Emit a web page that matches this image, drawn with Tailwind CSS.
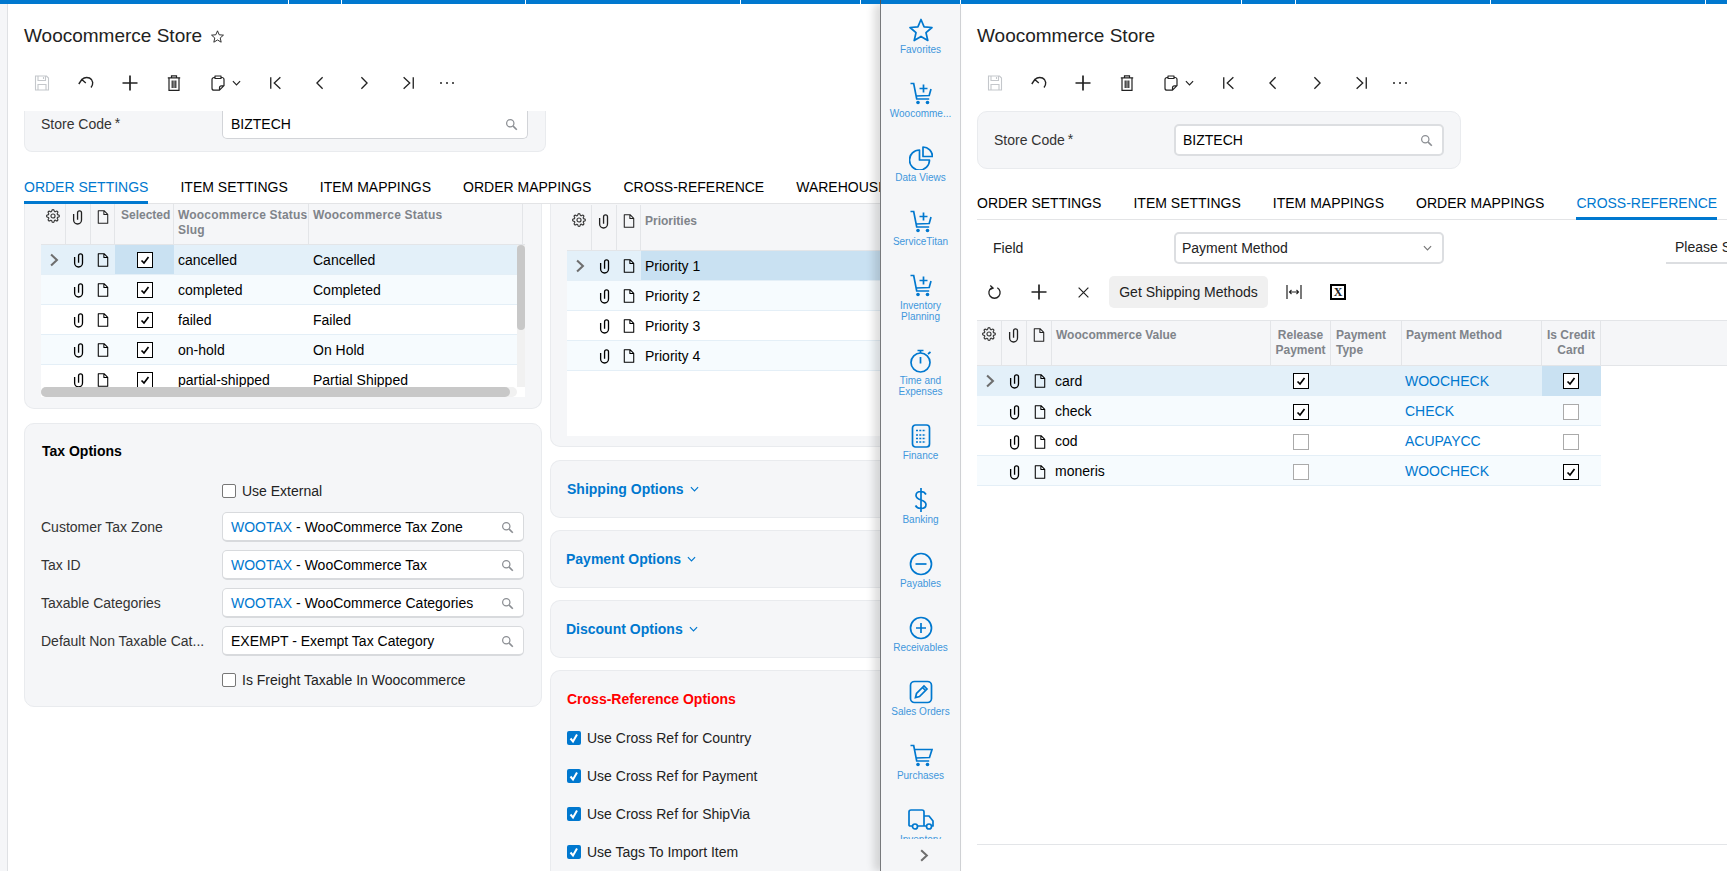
<!DOCTYPE html>
<html><head><meta charset="utf-8"><title>Woocommerce Store</title>
<script src="https://cdn.jsdelivr.net/npm/@tailwindcss/browser@4"></script></head>
<body class="m-0 bg-white">
<svg width="0" height="0" class="absolute">
<defs>
<symbol id="gear" viewBox="0 0 24 24"><g fill="none" stroke="currentColor" stroke-width="1.900"><circle cx="12" cy="12" r="3.500"/><path d="M19.4 15a1.65 1.65 0 0 0 .33 1.82l.06.06a2 2 0 0 1 0 2.83 2 2 0 0 1-2.83 0l-.06-.06a1.65 1.65 0 0 0-1.82-.33 1.65 1.65 0 0 0-1 1.51V21a2 2 0 0 1-2 2 2 2 0 0 1-2-2v-.09A1.65 1.65 0 0 0 9 19.4a1.65 1.65 0 0 0-1.82.33l-.06.06a2 2 0 0 1-2.83 0 2 2 0 0 1 0-2.83l.06-.06a1.65 1.65 0 0 0 .33-1.82 1.65 1.65 0 0 0-1.51-1H3a2 2 0 0 1-2-2 2 2 0 0 1 2-2h.09A1.65 1.65 0 0 0 4.6 9a1.65 1.65 0 0 0-.33-1.82l-.06-.06a2 2 0 0 1 0-2.83 2 2 0 0 1 2.83 0l.06.06a1.65 1.65 0 0 0 1.82.33H9a1.65 1.65 0 0 0 1-1.51V3a2 2 0 0 1 2-2 2 2 0 0 1 2 2v.09a1.65 1.65 0 0 0 1 1.51 1.65 1.65 0 0 0 1.82-.33l.06-.06a2 2 0 0 1 2.83 0 2 2 0 0 1 0 2.83l-.06.06a1.65 1.65 0 0 0-.33 1.82V9a1.65 1.65 0 0 0 1.51 1H21a2 2 0 0 1 2 2 2 2 0 0 1-2 2h-.09a1.65 1.65 0 0 0-1.51 1z"/></g></symbol>
<symbol id="clip" viewBox="0 0 16 16"><path fill="none" stroke="currentColor" stroke-width="1.500" d="M3 4.500v7a4.500 4.500 0 0 0 9 0V3.200a2.250 2.250 0 0 0-4.500 0V11"/></symbol>
<symbol id="doc" viewBox="0 0 16 16"><path fill="none" stroke="currentColor" stroke-width="1.200" stroke-linejoin="round" d="M2.600.8h6.600l4.200 4.200v10.200H2.600zM9 .8V5.200h4.400"/></symbol>
<symbol id="search" viewBox="0 0 16 16"><g fill="none" stroke="currentColor" stroke-width="1.500"><circle cx="6.500" cy="6.500" r="4.500"/><path stroke-width="2" d="M10 10l4.500 4.500"/></g></symbol>
<symbol id="chev" viewBox="0 0 10 6"><path fill="none" stroke="currentColor" stroke-width="1.300" d="M1 1l4 4 4-4"/></symbol>
<symbol id="rowarrow" viewBox="0 0 12 16"><path fill="none" stroke="currentColor" stroke-width="2.500" d="M2.500 1.500L9.500 8l-7 6.500"/></symbol>
<symbol id="save" viewBox="0 0 16 16"><path fill="none" stroke="currentColor" stroke-width="1.100" d="M1.500 1h11l2 2v12h-13zM4 1v4.500h7.500V1M9.500 2v2M4 15V9.500h8V15"/></symbol>
<symbol id="undo" viewBox="0 0 16 16"><path fill="none" stroke="currentColor" stroke-width="1.400" d="M.8 9l3-4.500 4 3.500M3.800 4.500C6 2.500 9 2 11.500 3c4 2 4 6.500 1.500 9.500"/></symbol>
<symbol id="plus" viewBox="0 0 16 16"><path fill="none" stroke="currentColor" stroke-width="1.700" d="M8 .5v15M.5 8h15"/></symbol>
<symbol id="trash" viewBox="0 0 16 16"><path fill="none" stroke="currentColor" stroke-width="1.200" d="M1.800 2.800h12.400M5.500 2.800V.8h5v2M3 2.800v12.500h10V2.800M6.200 5.500v7.500M9.800 5.500v7.500M8 5.500v7.500"/></symbol>
<symbol id="copy" viewBox="0 0 16 16"><path fill="none" stroke="currentColor" stroke-width="1.200" stroke-linejoin="round" d="M5 2.500H4a2 2 0 0 0-2 2v8.700a2 2 0 0 0 2 2h5.500l4.500-4.500V4.500a2 2 0 0 0-2-2h-1M5 1h6v2.500H5zM9.500 15v-2.200a2 2 0 0 1 2-2H14"/></symbol>
<symbol id="first" viewBox="0 0 16 16"><path fill="none" stroke="currentColor" stroke-width="1.500" d="M2 1.500v13M13 1.500L6 8l7 6.500"/></symbol>
<symbol id="prev" viewBox="0 0 16 16"><path fill="none" stroke="currentColor" stroke-width="1.500" d="M11 1.500L4.500 8l6.500 6.500"/></symbol>
<symbol id="next" viewBox="0 0 16 16"><path fill="none" stroke="currentColor" stroke-width="1.500" d="M5 1.500L11.500 8 5 14.500"/></symbol>
<symbol id="last" viewBox="0 0 16 16"><path fill="none" stroke="currentColor" stroke-width="1.500" d="M14 1.500v13M3 1.500L10 8l-7 6.500"/></symbol>
<symbol id="dots" viewBox="0 0 16 16"><g fill="currentColor"><circle cx="2" cy="8" r="1"/><circle cx="8" cy="8" r="1"/><circle cx="14" cy="8" r="1"/></g></symbol>
<symbol id="star" viewBox="0 0 24 24"><path fill="none" stroke="currentColor" stroke-width="1.700" stroke-linejoin="round" d="M12 1.500l3.100 7.300 7.900.7-6 5.200 1.800 7.800L12 18.400l-6.800 4.100L7 14.700 1 9.500l7.900-.7z"/></symbol>
<symbol id="cartplus" viewBox="0 0 24 24"><g fill="none" stroke="currentColor" stroke-width="1.700"><path d="M1.500 1.500h3.200l3 15.500h12.500M22 7l-1.800 6.500L7 14M14.500 2.500v8M10.500 6.500h8"/></g><circle cx="9" cy="20.500" r="1.800" fill="currentColor"/><circle cx="18.500" cy="20.500" r="1.800" fill="currentColor"/></symbol>
<symbol id="cart" viewBox="0 0 24 24"><g fill="none" stroke="currentColor" stroke-width="1.700"><path d="M1.500 1.500h3.200l3 15.500h12.500M5.500 5.500H23l-2.500 8L7 14"/></g><circle cx="9" cy="20.500" r="1.800" fill="currentColor"/><circle cx="18.500" cy="20.500" r="1.800" fill="currentColor"/></symbol>
<symbol id="pie" viewBox="0 0 24 24"><g fill="none" stroke="currentColor" stroke-width="1.700" stroke-linejoin="round"><path d="M10.500 4a10 10 0 1 0 10 10H10.500z"/><path d="M14 1a9.500 9.500 0 0 1 9.500 9.500H14z"/></g></symbol>
<symbol id="timer" viewBox="0 0 24 24"><g fill="none" stroke="currentColor" stroke-width="1.700"><circle cx="11.500" cy="13.500" r="9.500"/><path d="M11.500 8v6.500M8.500 1.500h6M11.500 1.500v2.500M19 5l2.500-2"/></g></symbol>
<symbol id="calc" viewBox="0 0 24 24"><rect x="3.500" y="1" width="17" height="22" rx="3" fill="none" stroke="currentColor" stroke-width="1.700"/><path fill="none" stroke="currentColor" stroke-width="1.600" stroke-dasharray="2 1.300" d="M7 6.500h10M7 11h10M7 14.500h10M7 18h10"/></symbol>
<symbol id="dollar" viewBox="0 0 24 24"><path fill="none" stroke="currentColor" stroke-width="1.700" d="M17 6.500C16 4.500 14.500 3.500 12 3.500c-3 0-5 1.700-5 4 0 5.500 10 3.500 10 9 0 2.300-2 4-5 4-2.500 0-4.500-1-5.500-3M12 0v24"/></symbol>
<symbol id="minusc" viewBox="0 0 24 24"><g fill="none" stroke="currentColor" stroke-width="1.700"><circle cx="12" cy="12" r="10.500"/><path d="M6.500 12h11"/></g></symbol>
<symbol id="plusc" viewBox="0 0 24 24"><g fill="none" stroke="currentColor" stroke-width="1.700"><circle cx="12" cy="12" r="10.500"/><path d="M7 12h10M12 7v10"/></g></symbol>
<symbol id="edit" viewBox="0 0 24 24"><g fill="none" stroke="currentColor" stroke-width="1.700"><rect x="1.500" y="1.500" width="21" height="21" rx="4"/><path d="M6.500 17.500l1-4L15 6l3 3-7.500 7.500zM13.500 7.500l3 3"/></g></symbol>
<symbol id="truck" viewBox="0 0 26 24"><g fill="none" stroke="currentColor" stroke-width="1.700" stroke-linejoin="round"><path d="M5 18H2a1 1 0 0 1-1-1V4a2 2 0 0 1 2-2h11a2 2 0 0 1 2 2v14H9M16 8h5l4 5v5h-2M19 18h-3"/><circle cx="7" cy="18.500" r="2.500"/><circle cx="21" cy="18.500" r="2.500"/></g></symbol>
<symbol id="refresh" viewBox="0 0 16 16"><path fill="none" stroke="currentColor" stroke-width="1.400" d="M5 3.500a6 6 0 1 0 6 0M3.500 1L6.500 3.800 3 5.500"/></symbol>
<symbol id="x" viewBox="0 0 16 16"><path fill="none" stroke="currentColor" stroke-width="1.500" d="M2 2l12 12M14 2L2 14"/></symbol>
<symbol id="fit" viewBox="0 0 16 16"><path fill="none" stroke="currentColor" stroke-width="1.200" d="M1 1v14M15 1v14"/><path fill="none" stroke="currentColor" stroke-width="1.100" d="M3.500 8h9M5.500 6L3.500 8l2 2M10.500 6l2 2-2 2"/></symbol>
</defs></svg>

<div class="w-[1727px] h-[871px] overflow-hidden flex flex-col font-['Liberation_Sans',Arial,sans-serif] text-[14px] text-black">
  <div class="h-[4px] shrink-0 flex bg-[#0078cf] relative z-20">
    <div class="w-[289px] border-r border-white"></div>
    <div class="w-[53px] border-r border-white"></div>
    <div class="w-[184px] border-r border-white"></div>
    <div class="w-[215px] border-r border-white"></div>
    <div class="w-[120px] border-r border-white"></div>
    <div class="w-[20px] border-r border-[#555]"></div>
    <div class="w-[80px] border-r border-white"></div>
    <div class="w-[281px] border-r border-white"></div>
    <div class="w-[54px] border-r border-white"></div>
    <div class="w-[195px] border-r border-white"></div>
    <div class="w-[215px] border-r border-white"></div>
    <div class="flex-1"></div>
  </div>
  <div class="flex flex-1 min-h-0">
    <!-- LEFT PANEL -->
    <div class="w-[880px] shrink-0 flex overflow-hidden">
      <div class="w-[8px] shrink-0 bg-[#f5f6f8] border-r border-[#dfe1e4]"></div>
      <div class="w-[872px] shrink-0 pl-[16px]">
        <div class="h-[62px] pt-[2px] flex items-center text-[19px] text-[#222]"><span>Woocommerce Store</span><svg class="w-[13px] h-[13px] ml-[9px] text-[#222]"><use href="#star"/></svg></div>
        <div class="h-[34px] flex items-center text-[#222] pl-[10px]">
          <div class="w-[44px]"><svg class="w-[16px] h-[16px] text-[#c4c7cb]"><use href="#save"/></svg></div>
          <div class="w-[44px]"><svg class="w-[16px] h-[16px]"><use href="#undo"/></svg></div>
          <div class="w-[44px]"><svg class="w-[16px] h-[16px]"><use href="#plus"/></svg></div>
          <div class="w-[44px]"><svg class="w-[16px] h-[16px]"><use href="#trash"/></svg></div>
          <div class="w-[59px] flex items-center gap-[6px]"><svg class="w-[16px] h-[16px]"><use href="#copy"/></svg><svg class="w-[9px] h-[6px]"><use href="#chev"/></svg></div>
          <div class="w-[44px]"><svg class="w-[14px] h-[14px]"><use href="#first"/></svg></div>
          <div class="w-[44px]"><svg class="w-[14px] h-[14px]"><use href="#prev"/></svg></div>
          <div class="w-[44px]"><svg class="w-[14px] h-[14px]"><use href="#next"/></svg></div>
          <div class="w-[38px]"><svg class="w-[14px] h-[14px]"><use href="#last"/></svg></div>
          <div><svg class="w-[16px] h-[16px]"><use href="#dots"/></svg></div>
        </div>
        <div class="mt-[11px] w-[522px] h-[41px] bg-[#f5f6f8] border-b border-x border-[#e9ebee] rounded-b-[8px] flex pl-[16px] pr-[17px]">
          <div class="w-[181px] h-[27px] flex items-center text-[#333]">Store Code<span class="ml-[3px] -mt-[2px]">*</span></div>
          <div class="flex-1 h-[28px] bg-white border-b border-x border-[#d2d4d8] rounded-b-[5px] flex items-center justify-between pl-[8px] pr-[9px]">BIZTECH<svg class="w-[13px] h-[13px] text-[#8b8e93]"><use href="#search"/></svg></div>
        </div>
        <div class="mt-[20px] h-[32px] w-[856px] flex gap-[32px] border-b border-[#e3e4e6] whitespace-nowrap">
          <div class="h-[32px] pt-[5px] border-b-[3px] border-[#0078cf] text-[#0078cf]">ORDER SETTINGS</div>
          <div class="pt-[5px]">ITEM SETTINGS</div><div class="pt-[5px]">ITEM MAPPINGS</div><div class="pt-[5px]">ORDER MAPPINGS</div><div class="pt-[5px]">CROSS-REFERENCE</div><div class="pt-[5px]">WAREHOUSE</div>
        </div>
        <div class="flex gap-[8px]">
          <!-- left column -->
          <div class="w-[518px] shrink-0">
            <div class="h-[205px] bg-[#f5f6f8] border-x border-b border-[#e9ebee] rounded-b-[10px] pl-[16px]">
              <div class="relative w-[484px] h-[193px] bg-white overflow-hidden">
                <div class="grid grid-cols-[25px_25px_24px_59px_135px_214px] h-[41px] bg-[#f5f6f8] border-b border-[#e3e5e8] text-[12px] font-bold text-[#80848a] leading-[15px] tracking-[0.2px]">
                  <div class="border-r border-[#e3e5e8] flex justify-center pt-[5px] text-[#333]"><svg class="w-[14px] h-[14px]"><use href="#gear"/></svg></div>
                  <div class="border-r border-[#e3e5e8] flex justify-center pt-[5px] text-[#222]"><svg class="w-[14px] h-[16px]"><use href="#clip"/></svg></div>
                  <div class="border-r border-[#e3e5e8] flex justify-center pt-[5px] text-[#222]"><svg class="w-[14px] h-[16px]"><use href="#doc"/></svg></div>
                  <div class="border-r border-[#e3e5e8] pt-[4px] pl-[6px] tracking-normal">Selected</div>
                  <div class="border-r border-[#e3e5e8] pt-[4px] pl-[4px]">Woocommerce Status Slug</div>
                  <div class="border-r border-[#e3e5e8] pt-[4px] pl-[4px]">Woocommerce Status</div>
                </div>
                <div class="grid grid-cols-[25px_25px_24px_59px_135px_214px] h-[30px] bg-[#e3f0f9] border-b border-[#e4eff7] items-center">
                  <div class="flex justify-center text-[#6e6e6e]"><svg class="w-[10px] h-[14px]"><use href="#rowarrow"/></svg></div>
                  <div class="flex justify-center"><svg class="w-[14px] h-[16px]"><use href="#clip"/></svg></div>
                  <div class="flex justify-center"><svg class="w-[14px] h-[16px]"><use href="#doc"/></svg></div>
                  <div class="h-[29px] bg-[#c9e1f2] flex items-center justify-center"><span class="w-[16px] h-[16px] bg-white border-[1.5px] border-black flex items-center justify-center"><svg viewBox="0 0 12 12" class="w-[12px] h-[12px]"><path fill="none" stroke="#000" stroke-width="1.700" d="M2.500 6.500l2.500 2.500 4.500-6"/></svg></span></div>
                  <div class="pl-[4px] pt-[1px]">cancelled</div><div class="pl-[4px] pt-[1px]">Cancelled</div>
                </div>
                <div class="grid grid-cols-[25px_25px_24px_59px_135px_214px] h-[30px] bg-[#f6fbfe] border-b border-[#e4eff7] items-center">
                  <div></div>
                  <div class="flex justify-center"><svg class="w-[14px] h-[16px]"><use href="#clip"/></svg></div>
                  <div class="flex justify-center"><svg class="w-[14px] h-[16px]"><use href="#doc"/></svg></div>
                  <div class="flex items-center justify-center"><span class="w-[16px] h-[16px] bg-white border-[1.5px] border-black flex items-center justify-center"><svg viewBox="0 0 12 12" class="w-[12px] h-[12px]"><path fill="none" stroke="#000" stroke-width="1.700" d="M2.500 6.500l2.500 2.500 4.500-6"/></svg></span></div>
                  <div class="pl-[4px] pt-[1px]">completed</div><div class="pl-[4px] pt-[1px]">Completed</div>
                </div>
                <div class="grid grid-cols-[25px_25px_24px_59px_135px_214px] h-[30px] bg-white border-b border-[#e4eff7] items-center">
                  <div></div>
                  <div class="flex justify-center"><svg class="w-[14px] h-[16px]"><use href="#clip"/></svg></div>
                  <div class="flex justify-center"><svg class="w-[14px] h-[16px]"><use href="#doc"/></svg></div>
                  <div class="flex items-center justify-center"><span class="w-[16px] h-[16px] bg-white border-[1.5px] border-black flex items-center justify-center"><svg viewBox="0 0 12 12" class="w-[12px] h-[12px]"><path fill="none" stroke="#000" stroke-width="1.700" d="M2.500 6.500l2.500 2.500 4.500-6"/></svg></span></div>
                  <div class="pl-[4px] pt-[1px]">failed</div><div class="pl-[4px] pt-[1px]">Failed</div>
                </div>
                <div class="grid grid-cols-[25px_25px_24px_59px_135px_214px] h-[30px] bg-[#f6fbfe] border-b border-[#e4eff7] items-center">
                  <div></div>
                  <div class="flex justify-center"><svg class="w-[14px] h-[16px]"><use href="#clip"/></svg></div>
                  <div class="flex justify-center"><svg class="w-[14px] h-[16px]"><use href="#doc"/></svg></div>
                  <div class="flex items-center justify-center"><span class="w-[16px] h-[16px] bg-white border-[1.5px] border-black flex items-center justify-center"><svg viewBox="0 0 12 12" class="w-[12px] h-[12px]"><path fill="none" stroke="#000" stroke-width="1.700" d="M2.500 6.500l2.500 2.500 4.500-6"/></svg></span></div>
                  <div class="pl-[4px] pt-[1px]">on-hold</div><div class="pl-[4px] pt-[1px]">On Hold</div>
                </div>
                <div class="grid grid-cols-[25px_25px_24px_59px_135px_214px] h-[30px] bg-white items-center">
                  <div></div>
                  <div class="flex justify-center"><svg class="w-[14px] h-[16px]"><use href="#clip"/></svg></div>
                  <div class="flex justify-center"><svg class="w-[14px] h-[16px]"><use href="#doc"/></svg></div>
                  <div class="flex items-center justify-center"><span class="w-[16px] h-[16px] bg-white border-[1.5px] border-black flex items-center justify-center"><svg viewBox="0 0 12 12" class="w-[12px] h-[12px]"><path fill="none" stroke="#000" stroke-width="1.700" d="M2.500 6.500l2.500 2.500 4.500-6"/></svg></span></div>
                  <div class="pl-[4px]">partial-shipped</div><div class="pl-[4px]">Partial Shipped</div>
                </div>
                <!-- scrollbars -->
                <div class="absolute left-[476px] top-[41px] w-[8px] h-[142px] bg-[#f1f1f1]"><div class="w-[8px] h-[85px] bg-[#c8c8c8] rounded-[4px]"></div></div>
                <div class="absolute left-0 top-[183px] w-[484px] h-[10px] bg-white"><div class="w-[476px] h-[10px] bg-[#f1f1f1] rounded-[5px]"><div class="w-[469px] h-[10px] bg-[#c8c8c8] rounded-[5px]"></div></div></div>
              </div>
            </div>
            <div class="mt-[14px] h-[284px] bg-[#f5f6f8] border border-[#e9ebee] rounded-[10px] pl-[16px] pr-[17px] pt-[18px]">
              <div class="font-bold h-[18px] leading-[18px] pl-[1px]">Tax Options</div>
              <div class="h-[20px] mt-[21px] flex items-center pl-[181px] text-[#222]"><span class="w-[14px] h-[14px] bg-white border border-[#777] rounded-[2px] mr-[6px]"></span>Use External</div>
              <div class="mt-[11px] flex flex-col gap-[8px] text-[#333]">
                <div class="flex items-center h-[30px]"><div class="w-[181px] shrink-0">Customer Tax Zone</div><div class="flex-1 h-[30px] bg-white border-b-2 border border-[#d8dadd] rounded-[5px] flex items-center justify-between pl-[8px] pr-[9px] pt-[2px] text-black"><span><span class="text-[#0078cf]">WOOTAX</span> - WooCommerce Tax Zone</span><svg class="w-[13px] h-[13px] text-[#8b8e93]"><use href="#search"/></svg></div></div>
                <div class="flex items-center h-[30px]"><div class="w-[181px] shrink-0">Tax ID</div><div class="flex-1 h-[30px] bg-white border-b-2 border border-[#d8dadd] rounded-[5px] flex items-center justify-between pl-[8px] pr-[9px] pt-[2px] text-black"><span><span class="text-[#0078cf]">WOOTAX</span> - WooCommerce Tax</span><svg class="w-[13px] h-[13px] text-[#8b8e93]"><use href="#search"/></svg></div></div>
                <div class="flex items-center h-[30px]"><div class="w-[181px] shrink-0">Taxable Categories</div><div class="flex-1 h-[30px] bg-white border-b-2 border border-[#d8dadd] rounded-[5px] flex items-center justify-between pl-[8px] pr-[9px] pt-[2px] text-black"><span><span class="text-[#0078cf]">WOOTAX</span> - WooCommerce Categories</span><svg class="w-[13px] h-[13px] text-[#8b8e93]"><use href="#search"/></svg></div></div>
                <div class="flex items-center h-[30px]"><div class="w-[181px] shrink-0 whitespace-nowrap">Default Non Taxable Cat...</div><div class="flex-1 h-[30px] bg-white border-b-2 border border-[#d8dadd] rounded-[5px] flex items-center justify-between pl-[8px] pr-[9px] pt-[2px] text-black"><span>EXEMPT - Exempt Tax Category</span><svg class="w-[13px] h-[13px] text-[#8b8e93]"><use href="#search"/></svg></div></div>
              </div>
              <div class="h-[20px] mt-[14px] flex items-center pl-[181px] text-[#222]"><span class="w-[14px] h-[14px] bg-white border border-[#777] rounded-[2px] mr-[6px]"></span>Is Freight Taxable In Woocommerce</div>
            </div>
          </div>
          <!-- right column -->
          <div class="w-[330px] shrink-0">
            <div class="h-[243px] bg-[#f5f6f8] border-l border-b border-[#e9ebee] rounded-bl-[10px] pl-[16px] pt-[1px]">
              <div class="h-[231px] bg-white w-[330px]">
                <div class="grid grid-cols-[25px_25px_24px_1fr] h-[46px] bg-[#f5f6f8] border-b border-[#e3e5e8] text-[12px] font-bold text-[#80848a]">
                  <div class="border-r border-[#e3e5e8] flex justify-center pt-[8px] text-[#333]"><svg class="w-[14px] h-[14px]"><use href="#gear"/></svg></div>
                  <div class="border-r border-[#e3e5e8] flex justify-center pt-[8px] text-[#222]"><svg class="w-[14px] h-[16px]"><use href="#clip"/></svg></div>
                  <div class="border-r border-[#e3e5e8] flex justify-center pt-[8px] text-[#222]"><svg class="w-[14px] h-[16px]"><use href="#doc"/></svg></div>
                  <div class="pt-[7px] pl-[4px]">Priorities</div>
                </div>
                <div class="grid grid-cols-[25px_25px_24px_1fr] h-[30px] bg-[#e3f0f9] border-b border-[#e4eff7] items-center">
                  <div class="flex justify-center text-[#6e6e6e]"><svg class="w-[10px] h-[14px]"><use href="#rowarrow"/></svg></div>
                  <div class="flex justify-center"><svg class="w-[14px] h-[16px]"><use href="#clip"/></svg></div>
                  <div class="flex justify-center"><svg class="w-[14px] h-[16px]"><use href="#doc"/></svg></div>
                  <div class="h-[29px] bg-[#c9e1f2] flex items-center pl-[4px] pt-[2px]">Priority 1</div>
                </div>
                <div class="grid grid-cols-[25px_25px_24px_1fr] h-[30px] bg-[#f6fbfe] border-b border-[#e4eff7] items-center">
                  <div></div>
                  <div class="flex justify-center"><svg class="w-[14px] h-[16px]"><use href="#clip"/></svg></div>
                  <div class="flex justify-center"><svg class="w-[14px] h-[16px]"><use href="#doc"/></svg></div>
                  <div class="pl-[4px] pt-[2px]">Priority 2</div>
                </div>
                <div class="grid grid-cols-[25px_25px_24px_1fr] h-[30px] bg-white border-b border-[#e4eff7] items-center">
                  <div></div>
                  <div class="flex justify-center"><svg class="w-[14px] h-[16px]"><use href="#clip"/></svg></div>
                  <div class="flex justify-center"><svg class="w-[14px] h-[16px]"><use href="#doc"/></svg></div>
                  <div class="pl-[4px] pt-[2px]">Priority 3</div>
                </div>
                <div class="grid grid-cols-[25px_25px_24px_1fr] h-[30px] bg-[#f6fbfe] border-b border-[#e4eff7] items-center">
                  <div></div>
                  <div class="flex justify-center"><svg class="w-[14px] h-[16px]"><use href="#clip"/></svg></div>
                  <div class="flex justify-center"><svg class="w-[14px] h-[16px]"><use href="#doc"/></svg></div>
                  <div class="pl-[4px] pt-[2px]">Priority 4</div>
                </div>
              </div>
            </div>
            <div class="mt-[13px] h-[58px] bg-[#f5f6f8] border-l border-y border-[#e9ebee] rounded-l-[10px] flex items-center pl-[16px] text-[#0078cf] font-bold">Shipping Options<svg class="w-[9px] h-[6px] ml-[6px]"><use href="#chev"/></svg></div>
            <div class="mt-[12px] h-[58px] bg-[#f5f6f8] border-l border-y border-[#e9ebee] rounded-l-[10px] flex items-center pl-[15px] text-[#0078cf] font-bold">Payment Options<svg class="w-[9px] h-[6px] ml-[6px]"><use href="#chev"/></svg></div>
            <div class="mt-[12px] h-[58px] bg-[#f5f6f8] border-l border-y border-[#e9ebee] rounded-l-[10px] flex items-center pl-[15px] text-[#0078cf] font-bold">Discount Options<svg class="w-[9px] h-[6px] ml-[6px]"><use href="#chev"/></svg></div>
            <div class="mt-[12px] h-[230px] bg-[#f5f6f8] border-l border-t border-[#e9ebee] rounded-tl-[10px] pl-[16px] pt-[19px]">
              <div class="font-bold text-[#ff0000] h-[18px] leading-[18px]">Cross-Reference Options</div>
              <div class="mt-[20px] flex flex-col gap-[18px] text-[#222]">
                <div class="h-[20px] flex items-center"><span class="w-[14px] h-[14px] bg-[#0078cf] rounded-[2px] mr-[6px] flex items-center justify-center"><svg viewBox="0 0 14 14" class="w-[14px] h-[14px]"><path fill="none" stroke="#fff" stroke-width="2" d="M3.500 7.500l2.500 3 4-7"/></svg></span>Use Cross Ref for Country</div>
                <div class="h-[20px] flex items-center"><span class="w-[14px] h-[14px] bg-[#0078cf] rounded-[2px] mr-[6px] flex items-center justify-center"><svg viewBox="0 0 14 14" class="w-[14px] h-[14px]"><path fill="none" stroke="#fff" stroke-width="2" d="M3.500 7.500l2.500 3 4-7"/></svg></span>Use Cross Ref for Payment</div>
                <div class="h-[20px] flex items-center"><span class="w-[14px] h-[14px] bg-[#0078cf] rounded-[2px] mr-[6px] flex items-center justify-center"><svg viewBox="0 0 14 14" class="w-[14px] h-[14px]"><path fill="none" stroke="#fff" stroke-width="2" d="M3.500 7.500l2.500 3 4-7"/></svg></span>Use Cross Ref for ShipVia</div>
                <div class="h-[20px] flex items-center"><span class="w-[14px] h-[14px] bg-[#0078cf] rounded-[2px] mr-[6px] flex items-center justify-center"><svg viewBox="0 0 14 14" class="w-[14px] h-[14px]"><path fill="none" stroke="#fff" stroke-width="2" d="M3.500 7.500l2.500 3 4-7"/></svg></span>Use Tags To Import Item</div>
              </div>
            </div>
          </div>
        </div>
      </div>
    </div>
    <!-- SIDEBAR -->
    <div class="relative z-10 w-[81px] shrink-0 flex flex-col bg-[#f5f6f8] border-l border-l-[#77797c] border-r border-r-[#cfd1d4] shadow-[-6px_0_8px_rgba(0,0,0,0.14)] text-[10px] leading-[11px] text-[#3f97dc] text-center">
      <div class="flex-1 min-h-0 overflow-hidden">
        <div class="h-[64px] pt-[14px] flex flex-col items-center text-[#0078cf]"><svg class="w-[24px] h-[24px] shrink-0"><use href="#star"/></svg><span class="text-[#3f97dc] mt-[2px]">Favorites</span></div>
        <div class="h-[64px] pt-[14px] flex flex-col items-center text-[#0078cf]"><svg class="w-[24px] h-[24px] shrink-0"><use href="#cartplus"/></svg><span class="text-[#3f97dc] mt-[2px]">Woocomme...</span></div>
        <div class="h-[64px] pt-[14px] flex flex-col items-center text-[#0078cf]"><svg class="w-[24px] h-[24px] shrink-0"><use href="#pie"/></svg><span class="text-[#3f97dc] mt-[2px]">Data Views</span></div>
        <div class="h-[64px] pt-[14px] flex flex-col items-center text-[#0078cf]"><svg class="w-[24px] h-[24px] shrink-0"><use href="#cartplus"/></svg><span class="text-[#3f97dc] mt-[2px]">ServiceTitan</span></div>
        <div class="h-[75px] pt-[14px] flex flex-col items-center text-[#0078cf]"><svg class="w-[24px] h-[24px] shrink-0"><use href="#cartplus"/></svg><span class="text-[#3f97dc] mt-[2px]">Inventory<br>Planning</span></div>
        <div class="h-[75px] pt-[14px] flex flex-col items-center text-[#0078cf]"><svg class="w-[24px] h-[24px] shrink-0"><use href="#timer"/></svg><span class="text-[#3f97dc] mt-[2px]">Time and<br>Expenses</span></div>
        <div class="h-[64px] pt-[14px] flex flex-col items-center text-[#0078cf]"><svg class="w-[24px] h-[24px] shrink-0"><use href="#calc"/></svg><span class="text-[#3f97dc] mt-[2px]">Finance</span></div>
        <div class="h-[64px] pt-[14px] flex flex-col items-center text-[#0078cf]"><svg class="w-[24px] h-[24px] shrink-0"><use href="#dollar"/></svg><span class="text-[#3f97dc] mt-[2px]">Banking</span></div>
        <div class="h-[64px] pt-[14px] flex flex-col items-center text-[#0078cf]"><svg class="w-[24px] h-[24px] shrink-0"><use href="#minusc"/></svg><span class="text-[#3f97dc] mt-[2px]">Payables</span></div>
        <div class="h-[64px] pt-[14px] flex flex-col items-center text-[#0078cf]"><svg class="w-[24px] h-[24px] shrink-0"><use href="#plusc"/></svg><span class="text-[#3f97dc] mt-[2px]">Receivables</span></div>
        <div class="h-[64px] pt-[14px] flex flex-col items-center text-[#0078cf]"><svg class="w-[24px] h-[24px] shrink-0"><use href="#edit"/></svg><span class="text-[#3f97dc] mt-[2px]">Sales Orders</span></div>
        <div class="h-[64px] pt-[14px] flex flex-col items-center text-[#0078cf]"><svg class="w-[24px] h-[24px] shrink-0"><use href="#cart"/></svg><span class="text-[#3f97dc] mt-[2px]">Purchases</span></div>
        <div class="h-[64px] pt-[14px] flex flex-col items-center text-[#0078cf]"><svg class="w-[26px] h-[24px] shrink-0"><use href="#truck"/></svg><span class="text-[#3f97dc] mt-[2px]">Inventory</span></div>
      </div>
      <div class="h-[32px] shrink-0 flex items-center justify-center text-[#6e6e6e] pl-[6px]"><svg class="w-[10px] h-[13px]"><use href="#rowarrow"/></svg></div>
    </div>
    <!-- RIGHT PANEL -->
    <div class="flex-1 min-w-0 pl-[16px] overflow-hidden">
      <div class="h-[62px] pt-[2px] flex items-center text-[19px] text-[#222]">Woocommerce Store</div>
      <div class="h-[34px] flex items-center text-[#222] pl-[10px]">
        <div class="w-[44px]"><svg class="w-[16px] h-[16px] text-[#c4c7cb]"><use href="#save"/></svg></div>
        <div class="w-[44px]"><svg class="w-[16px] h-[16px]"><use href="#undo"/></svg></div>
        <div class="w-[44px]"><svg class="w-[16px] h-[16px]"><use href="#plus"/></svg></div>
        <div class="w-[44px]"><svg class="w-[16px] h-[16px]"><use href="#trash"/></svg></div>
        <div class="w-[59px] flex items-center gap-[6px]"><svg class="w-[16px] h-[16px]"><use href="#copy"/></svg><svg class="w-[9px] h-[6px]"><use href="#chev"/></svg></div>
        <div class="w-[44px]"><svg class="w-[14px] h-[14px]"><use href="#first"/></svg></div>
        <div class="w-[44px]"><svg class="w-[14px] h-[14px]"><use href="#prev"/></svg></div>
        <div class="w-[44px]"><svg class="w-[14px] h-[14px]"><use href="#next"/></svg></div>
        <div class="w-[38px]"><svg class="w-[14px] h-[14px]"><use href="#last"/></svg></div>
        <div><svg class="w-[16px] h-[16px]"><use href="#dots"/></svg></div>
      </div>
      <div class="mt-[11px] w-[484px] h-[58px] bg-[#f5f6f8] border border-[#e9ebee] rounded-[10px] flex items-center pl-[16px] pr-[16px]">
        <div class="w-[180px] flex items-center text-[#333]">Store Code<span class="ml-[3px] -mt-[2px]">*</span></div>
        <div class="flex-1 h-[32px] bg-white border-2 border-[#dcdee1] rounded-[5px] flex items-center justify-between pl-[7px] pr-[9px]">BIZTECH<svg class="w-[13px] h-[13px] text-[#8b8e93]"><use href="#search"/></svg></div>
      </div>
      <div class="mt-[19px] h-[32px] w-[750px] flex gap-[32px] border-b border-[#e3e4e6] whitespace-nowrap">
        <div class="pt-[5px]">ORDER SETTINGS</div><div class="pt-[5px]">ITEM SETTINGS</div><div class="pt-[5px]">ITEM MAPPINGS</div><div class="pt-[5px]">ORDER MAPPINGS</div>
        <div class="h-[32px] pt-[5px] border-b-[3px] border-[#0078cf] text-[#0078cf]">CROSS-REFERENCE</div>
      </div>
      <div class="mt-[12px] h-[32px] flex items-center pl-[16px] text-[#222]">
        <div class="w-[181px] shrink-0">Field</div>
        <div class="w-[270px] shrink-0 h-[32px] bg-white border-2 border-[#dcdee1] rounded-[5px] flex items-center justify-between pl-[6px] pr-[10px]">Payment Method<svg class="w-[9px] h-[6px] text-[#777]"><use href="#chev"/></svg></div>
        <div class="ml-[222px] pl-[9px] w-[61px] shrink-0 h-[32px] border-b-2 border-[#dcdee1] flex items-center whitespace-nowrap">Please S</div>
      </div>
      <div class="mt-[12px] h-[32px] flex items-center pl-[10px] text-[#222]">
        <div class="w-[44px]"><svg class="w-[15px] h-[16px]"><use href="#refresh"/></svg></div>
        <div class="w-[44px]"><svg class="w-[16px] h-[16px]"><use href="#plus"/></svg></div>
        <div class="w-[34px] pl-[2px]"><svg class="w-[13px] h-[13px]"><use href="#x"/></svg></div>
        <div class="w-[159px] h-[32px] bg-[#f0f0f0] rounded-[5px] flex items-center justify-center">Get Shipping Methods</div>
        <div class="ml-[18px] w-[44px]"><svg class="w-[16px] h-[16px]"><use href="#fit"/></svg></div>
        <div class="w-[16px] h-[16px] border-2 border-black flex items-center justify-center font-['Liberation_Serif',serif] font-bold text-[12px] leading-none">X</div>
      </div>
      <div class="mt-[12px] w-[767px]">
        <div class="grid grid-cols-[25px_25px_25px_219px_60px_71px_140px_59px_1fr] h-[46px] bg-[#f5f6f8] border-y border-[#e3e5e8] text-[12px] font-bold text-[#80848a] leading-[15px]">
          <div class="border-r border-[#e3e5e8] flex justify-center pt-[6px] text-[#333]"><svg class="w-[14px] h-[14px]"><use href="#gear"/></svg></div>
          <div class="border-r border-[#e3e5e8] flex justify-center pt-[6px] text-[#222]"><svg class="w-[14px] h-[16px]"><use href="#clip"/></svg></div>
          <div class="border-r border-[#e3e5e8] flex justify-center pt-[6px] text-[#222]"><svg class="w-[14px] h-[16px]"><use href="#doc"/></svg></div>
          <div class="border-r border-[#e3e5e8] pt-[7px] pl-[4px]">Woocommerce Value</div>
          <div class="border-r border-[#e3e5e8] pt-[7px] text-center">Release Payment</div>
          <div class="border-r border-[#e3e5e8] pt-[7px] pl-[5px]">Payment Type</div>
          <div class="border-r border-[#e3e5e8] pt-[7px] pl-[4px]">Payment Method</div>
          <div class="border-r border-[#e3e5e8] pt-[7px] text-center">Is Credit Card</div>
          <div></div>
        </div>
        <div class="w-[624px] grid grid-cols-[25px_25px_25px_219px_60px_71px_140px_59px] h-[30px] bg-[#e3f0f9] items-center">
          <div class="flex justify-center text-[#6e6e6e]"><svg class="w-[10px] h-[14px]"><use href="#rowarrow"/></svg></div>
          <div class="flex justify-center"><svg class="w-[14px] h-[16px]"><use href="#clip"/></svg></div>
          <div class="flex justify-center"><svg class="w-[14px] h-[16px]"><use href="#doc"/></svg></div>
          <div class="pl-[3px]">card</div>
          <div class="flex justify-center"><span class="w-[16px] h-[16px] bg-white border-[1.5px] border-black flex items-center justify-center"><svg viewBox="0 0 12 12" class="w-[12px] h-[12px]"><path fill="none" stroke="#000" stroke-width="1.700" d="M2.500 6.500l2.500 2.500 4.500-6"/></svg></span></div>
          <div></div>
          <div class="pl-[3px] text-[#0078cf]">WOOCHECK</div>
          <div class="h-[30px] bg-[#c9e1f2] flex items-center justify-center pr-[1px]"><span class="w-[16px] h-[16px] bg-white border-[1.5px] border-black flex items-center justify-center"><svg viewBox="0 0 12 12" class="w-[12px] h-[12px]"><path fill="none" stroke="#000" stroke-width="1.700" d="M2.500 6.500l2.500 2.500 4.500-6"/></svg></span></div>
        </div>
        <div class="w-[624px] grid grid-cols-[25px_25px_25px_219px_60px_71px_140px_59px] h-[30px] pt-[2px] bg-[#f6fbfe] border-b border-[#e4eff7] items-center">
          <div></div>
          <div class="flex justify-center"><svg class="w-[14px] h-[16px]"><use href="#clip"/></svg></div>
          <div class="flex justify-center"><svg class="w-[14px] h-[16px]"><use href="#doc"/></svg></div>
          <div class="pl-[3px]">check</div>
          <div class="flex justify-center"><span class="w-[16px] h-[16px] bg-white border-[1.5px] border-black flex items-center justify-center"><svg viewBox="0 0 12 12" class="w-[12px] h-[12px]"><path fill="none" stroke="#000" stroke-width="1.700" d="M2.500 6.500l2.500 2.500 4.500-6"/></svg></span></div>
          <div></div>
          <div class="pl-[3px] text-[#0078cf]">CHECK</div>
          <div class="flex justify-center pr-[1px]"><span class="w-[16px] h-[16px] bg-white border-[1.5px] border-[#aaa]"></span></div>
        </div>
        <div class="w-[624px] grid grid-cols-[25px_25px_25px_219px_60px_71px_140px_59px] h-[30px] pt-[2px] bg-white border-b border-[#e4eff7] items-center">
          <div></div>
          <div class="flex justify-center"><svg class="w-[14px] h-[16px]"><use href="#clip"/></svg></div>
          <div class="flex justify-center"><svg class="w-[14px] h-[16px]"><use href="#doc"/></svg></div>
          <div class="pl-[3px]">cod</div>
          <div class="flex justify-center"><span class="w-[16px] h-[16px] bg-white border-[1.5px] border-[#aaa]"></span></div>
          <div></div>
          <div class="pl-[3px] text-[#0078cf]">ACUPAYCC</div>
          <div class="flex justify-center pr-[1px]"><span class="w-[16px] h-[16px] bg-white border-[1.5px] border-[#aaa]"></span></div>
        </div>
        <div class="w-[624px] grid grid-cols-[25px_25px_25px_219px_60px_71px_140px_59px] h-[30px] pt-[2px] bg-[#f6fbfe] border-b border-[#e4eff7] items-center">
          <div></div>
          <div class="flex justify-center"><svg class="w-[14px] h-[16px]"><use href="#clip"/></svg></div>
          <div class="flex justify-center"><svg class="w-[14px] h-[16px]"><use href="#doc"/></svg></div>
          <div class="pl-[3px]">moneris</div>
          <div class="flex justify-center"><span class="w-[16px] h-[16px] bg-white border-[1.5px] border-[#aaa]"></span></div>
          <div></div>
          <div class="pl-[3px] text-[#0078cf]">WOOCHECK</div>
          <div class="flex justify-center pr-[1px]"><span class="w-[16px] h-[16px] bg-white border-[1.5px] border-black flex items-center justify-center"><svg viewBox="0 0 12 12" class="w-[12px] h-[12px]"><path fill="none" stroke="#000" stroke-width="1.700" d="M2.500 6.500l2.500 2.500 4.500-6"/></svg></span></div>
        </div>
        <div class="mt-[358px] h-px bg-[#e3e5e8]"></div>
      </div>
    </div>
  </div>
</div>
</body></html>
